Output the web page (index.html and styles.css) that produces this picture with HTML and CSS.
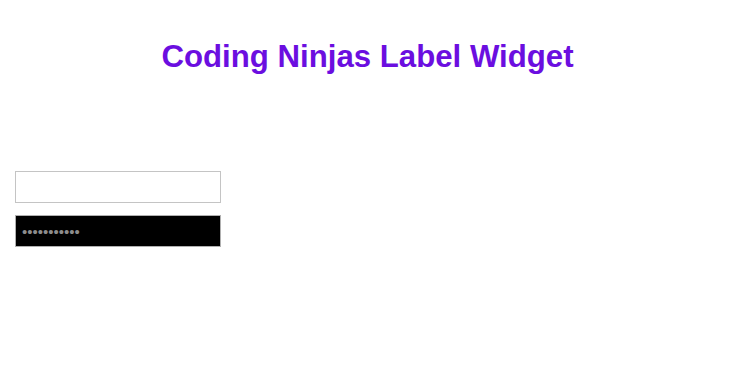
FILE: index.html
```html
<!DOCTYPE html>
<html>
  <head>
    <title>Coding Ninjas Label Widget</title>
    <link rel="stylesheet" href="styles.css">
  </head>
  <body>
    <h1 class="title">Coding Ninjas Label Widget</h1>
    <div class="form">
      <input class="field" type="text">
      <input class="field field-dark" type="password" value="secretvalue">
    </div>
  </body>
</html>
```

FILE: styles.css
```css
body {
  margin: 0;
  font-family: 'Liberation Sans', Arial, sans-serif;
  background: #ffffff;
}
.title {
  margin: 0;
  padding-top: 39px;
  text-align: center;
  font-size: 31.2px;
  font-weight: bold;
  color: #6b0ee0;
  line-height: 36px;
}
.form {
  display: flex;
  flex-direction: column;
  align-items: flex-start;
  gap: 12px;
  padding: 96px 0 0 15px;
}
.field {
  box-sizing: border-box;
  width: 206px;
  height: 32px;
  margin: 0;
  padding: 0 6px;
  border: 1px solid #c4c4c4;
  background: #ffffff;
  font-family: 'Liberation Sans', Arial, sans-serif;
  font-size: 15px;
  outline: none;
}
.field-dark {
  background: #000000;
  border-color: #b0b0b0;
  color: #8c8c8c;
}
```
